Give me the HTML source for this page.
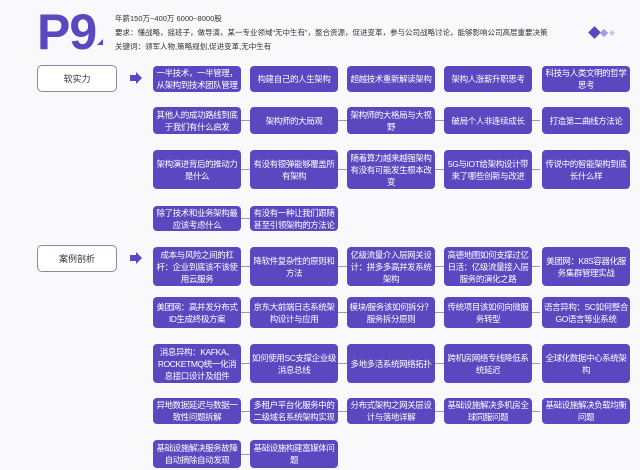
<!DOCTYPE html>
<html><head><meta charset="utf-8"><style>
body{margin:0;width:640px;height:470px;background:#f9f9fb;position:relative;overflow:hidden;font-family:"Liberation Sans","Noto Sans CJK SC",sans-serif}
.b{position:absolute;background:#5b47bf;color:#fff;border-radius:4px;font-size:8.5px;line-height:12px;letter-spacing:-0.4px;text-align:center;display:flex;align-items:center;justify-content:center;padding:0 1px;box-sizing:border-box;width:88px}
.l{position:absolute;height:1px;background:#9a9aa8}
.lab{position:absolute;left:37px;width:80px;height:27px;border:1px solid #8a87a8;border-radius:5px;box-sizing:border-box;font-size:9px;color:#333;display:flex;align-items:center;justify-content:center;background:#fff}
.t{position:absolute;left:115px;font-size:7.5px;color:#333;white-space:nowrap}
</style></head><body>
<div style="position:absolute;left:37px;top:4px;font-size:50px;font-weight:bold;color:#5b47bf;line-height:56px;letter-spacing:-1px">P9</div>
<div style="position:absolute;left:97px;top:39px;width:0;height:0;border-left:6px solid transparent;border-bottom:6px solid #5b47bf"></div>
<div class="t" style="top:13px">年薪150万~400万 6000~8000股</div>
<div class="t" style="top:27px">要求：懂战略，摇班子，做导演，某一专业领域“无中生有”，整合资源，促进变革，参与公司战略讨论，能够影响公司高层重要决策</div>
<div class="t" style="top:41px">关键词：领军人物,策略规划,促进变革,无中生有</div>
<div style="position:absolute;left:590px;top:28px;width:9px;height:9px;background:#5b47bf;transform:rotate(45deg)"></div>
<div style="position:absolute;left:601px;top:30px;width:6px;height:6px;background:#a79be0;transform:rotate(45deg)"></div>
<div style="position:absolute;left:610px;top:31px;width:4px;height:4px;background:#c9c1ee;transform:rotate(45deg)"></div>

<div class="lab" style="top:65px">软实力</div>
<div style="position:absolute;left:130px;top:75px;width:6px;height:6px;background:#5b47bf"></div>
<div style="position:absolute;left:136px;top:72px;border-left:6px solid #5b47bf;border-top:6px solid transparent;border-bottom:6px solid transparent"></div>
<div class="lab" style="top:245px">案例剖析</div>
<div style="position:absolute;left:130px;top:255px;width:6px;height:6px;background:#5b47bf"></div>
<div style="position:absolute;left:136px;top:252px;border-left:6px solid #5b47bf;border-top:6px solid transparent;border-bottom:6px solid transparent"></div>

<div class="l" style="left:240px;width:300px;top:120px"></div>
<div class="l" style="left:240px;width:300px;top:169px"></div>
<div class="l" style="left:240px;width:10px;top:218px"></div>
<div class="l" style="left:240px;width:300px;top:266px"></div>
<div class="l" style="left:240px;width:300px;top:312px"></div>
<div class="l" style="left:240px;width:300px;top:363px"></div>
<div class="l" style="left:240px;width:300px;top:411px"></div>
<div class="l" style="left:240px;width:10px;top:454px"></div>

<div class="b" style="left:153px;top:66px;height:26px">一半技术，一半管理，从架构到技术团队管理</div>
<div class="b" style="left:250px;top:66px;height:26px">构建自己的人生架构</div>
<div class="b" style="left:347px;top:66px;height:26px">超越技术重新解读架构</div>
<div class="b" style="left:444px;top:66px;height:26px">架构人涨薪升职思考</div>
<div class="b" style="left:542px;top:66px;height:26px">科技与人类文明的哲学思考</div>

<div class="b" style="left:153px;top:107px;height:27px">其他人的成功路线到底于我们有什么启发</div>
<div class="b" style="left:250px;top:107px;height:27px">架构师的大局观</div>
<div class="b" style="left:347px;top:107px;height:27px">架构师的大格局与大视野</div>
<div class="b" style="left:444px;top:107px;height:27px">破局个人非连续成长</div>
<div class="b" style="left:542px;top:107px;height:27px">打造第二曲线方法论</div>

<div class="b" style="left:153px;top:150px;height:39px">架构演进背后的推动力是什么</div>
<div class="b" style="left:250px;top:150px;height:39px">有没有银弹能够覆盖所有架构</div>
<div class="b" style="left:347px;top:150px;height:39px">随着算力越来越强架构有没有可能发生根本改变</div>
<div class="b" style="left:444px;top:150px;height:39px">5G与IOT给架构设计带来了哪些创新与改进</div>
<div class="b" style="left:542px;top:150px;height:39px">传说中的智能架构到底长什么样</div>

<div class="b" style="left:153px;top:206px;height:25px">除了技术和业务架构最应该考虑什么</div>
<div class="b" style="left:250px;top:206px;height:25px">有没有一种让我们跟随甚至引领架构的方法论</div>

<div class="b" style="left:153px;top:247px;height:39px">成本与风险之间的杠杆：企业到底该不该使用云服务</div>
<div class="b" style="left:250px;top:247px;height:39px">降软件复杂性的原则和方法</div>
<div class="b" style="left:347px;top:247px;height:39px">亿级流量介入层网关设计：拼多多高并发系统架构</div>
<div class="b" style="left:444px;top:247px;height:39px">高德地图如何支撑过亿日活：亿级流量接入层服务的演化之路</div>
<div class="b" style="left:542px;top:247px;height:39px">美团网：K8S容器化服务集群管理实战</div>

<div class="b" style="left:153px;top:297px;height:31px">美团网：高并发分布式ID生成终极方案</div>
<div class="b" style="left:250px;top:297px;height:31px">京东大前端日志系统架构设计与应用</div>
<div class="b" style="left:347px;top:297px;height:31px">模块/服务该如何拆分？服务拆分原则</div>
<div class="b" style="left:444px;top:297px;height:31px">传统项目该如何向微服务转型</div>
<div class="b" style="left:542px;top:297px;height:31px">语言异构：SC如何整合GO语言等业系统</div>

<div class="b" style="left:153px;top:344px;height:39px">消息异构：KAFKA、ROCKETMQ统一化消息接口设计及组件</div>
<div class="b" style="left:250px;top:344px;height:39px">如何使用SC支撑企业级消息总线</div>
<div class="b" style="left:347px;top:344px;height:39px">多地多活系统网络拓扑</div>
<div class="b" style="left:444px;top:344px;height:39px">跨机房网络专线降低系统延迟</div>
<div class="b" style="left:542px;top:344px;height:39px">全球化数据中心系统架构</div>

<div class="b" style="left:153px;top:398px;height:26px">异地数据延迟与数据一致性问题拆解</div>
<div class="b" style="left:250px;top:398px;height:26px">多租户平台化服务中的二级域名系统架构实现</div>
<div class="b" style="left:347px;top:398px;height:26px">分布式架构之网关层设计与落地详解</div>
<div class="b" style="left:444px;top:398px;height:26px">基础设施解决多机房全球同服问题</div>
<div class="b" style="left:542px;top:398px;height:26px">基础设施解决负载均衡问题</div>

<div class="b" style="left:153px;top:440px;height:28px">基础设施解决服务故障自动摘除自动发现</div>
<div class="b" style="left:250px;top:440px;height:28px">基础设施构建富媒体问题</div>
</body></html>
